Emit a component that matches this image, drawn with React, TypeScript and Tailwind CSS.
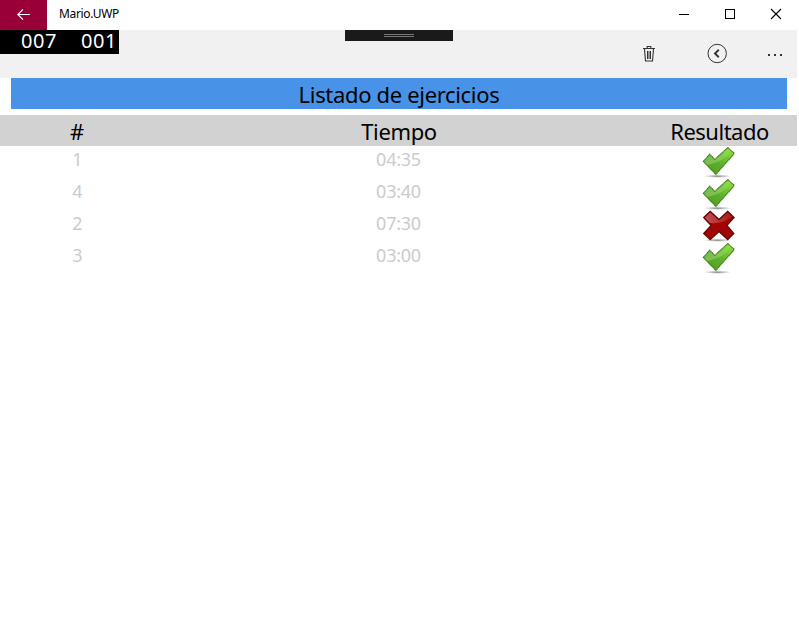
type Exercise = { id: number; time: string; passed: boolean };

const exercises: Exercise[] = [
  { id: 1, time: "04:35", passed: true },
  { id: 4, time: "03:40", passed: true },
  { id: 2, time: "07:30", passed: false },
  { id: 3, time: "03:00", passed: true },
];

function ResultIcon({ passed }: { passed: boolean }) {
  return (
    <svg width="34" height="32" viewBox="0 0 34 32">
      <defs>
        <linearGradient id="green" x1="0" y1="1" x2="0.8" y2="0">
          <stop offset="0" stopColor="#4c9a20" />
          <stop offset="0.5" stopColor="#5fae2a" />
          <stop offset="1" stopColor="#8ade3c" />
        </linearGradient>
        <linearGradient id="greenShine" x1="0" y1="0" x2="0" y2="1">
          <stop offset="0" stopColor="#c0e8a4" stopOpacity="0.1" />
          <stop offset="1" stopColor="#c0e8a4" stopOpacity="0.4" />
        </linearGradient>
        <linearGradient id="redShine" x1="0" y1="0" x2="1" y2="0">
          <stop offset="0" stopColor="#d78585" stopOpacity="0.6" />
          <stop offset="1" stopColor="#d78585" stopOpacity="0.15" />
        </linearGradient>
        <radialGradient id="shade">
          <stop offset="0" stopColor="#666" stopOpacity="0.85" />
          <stop offset="1" stopColor="#999" stopOpacity="0" />
        </radialGradient>
      </defs>
      <ellipse cx="15.5" cy="30.2" rx="14" ry="1.7" fill="url(#shade)" />
      {passed ? (
        <>
          <path d="M1.4 15.4 7.6 8.2 12.8 13.4 25.8 1.6 32.3 7.5 13.8 28.4Z" fill="url(#green)" />
          <path d="M1.4 15.4 7.6 8.2 12.8 13.4 25.8 1.6 29 4.5C25 11 18 16.5 5 18.9Z" fill="url(#greenShine)" />
          <path d="M1.4 15.4 7.6 8.2 12.8 13.4 25.8 1.6 32.3 7.5 13.8 28.4Z" fill="none" stroke="#3f7f22" strokeWidth="1.2" strokeDasharray="1.5 .3" />
        </>
      ) : (
        <>
          <path d="M1.8 7.6 8.2 1.4 17 9.5 25.7 1.4 32 7.6 24.8 15.5 31.7 23.4 25.7 29.6 17 21.5 8.2 29.6 1.8 23.4 9.2 15.5Z" fill="#a30505" />
          <path d="M1.8 7.6 8.2 1.4 17 9.5 25.7 1.4 30.7 6.3C25 10 21 14 7 13Z" fill="url(#redShine)" />
          <path d="M1.8 7.6 8.2 1.4 17 9.5 25.7 1.4 32 7.6 24.8 15.5 31.7 23.4 25.7 29.6 17 21.5 8.2 29.6 1.8 23.4 9.2 15.5Z" fill="none" stroke="#690505" strokeWidth="1.4" />
        </>
      )}
    </svg>
  );
}

function TitleBar() {
  return (
    <header className="flex h-[30px] w-[799px] items-stretch">
      <button className="flex w-[47px] items-center justify-center bg-[#9a0038]">
        <svg width="13" height="12" viewBox="0 0 13 12" fill="none" stroke="#fff" strokeWidth="1.1" className="mb-[3px]">
          <path d="M.8 6.5h12M6 1.3.8 6.5 6 11.7" />
        </svg>
      </button>
      <span className="ml-3 flex-1 text-[12px] leading-[28px] tracking-[-0.35px]">Mario.UWP</span>
      <div className="flex text-black">
        <svg width="46" height="30" fill="none" stroke="currentColor" shapeRendering="crispEdges"><path d="M18 14.5h10" /></svg>
        <svg width="46" height="30" fill="none" stroke="currentColor" shapeRendering="crispEdges"><path d="M18.5 9.5h9v9h-9z" /></svg>
        <svg width="46" height="30" fill="none" stroke="currentColor" strokeWidth="1.1"><path d="m18 9 10 10M28 9 18 19" /></svg>
      </div>
    </header>
  );
}

function CommandBar() {
  return (
    <nav className="flex h-12 w-[797px] items-start bg-[#f1f1f1]">
      <div className="flex h-6 w-[119px] bg-black pl-[21px] text-[20px] leading-[22px] tracking-[0.56px] text-white">
        <span className="w-[60px]">007</span>
        <span>001</span>
      </div>
      <div className="ml-[226px] flex h-[11px] w-[108px] flex-col items-center gap-px bg-[#1a1a1a] pt-1">
        <div className="h-px w-[30px] bg-[#777]" />
        <div className="h-px w-[30px] bg-[#777]" />
      </div>
      <div className="ml-auto flex h-12">
        <svg width="68" height="48" fill="none" stroke="#333">
          <path d="M26 18.5h12M30.2 18v-1.5h3.6V18M27.5 19l1 12h7l1-12" strokeWidth="1.1" />
          <path d="M30.5 21v8M32 21v8M33.5 21v8" strokeWidth="1" />
        </svg>
        <svg width="68" height="48" fill="none" stroke="#333">
          <circle cx="32.2" cy="23.5" r="9.2" />
          <path d="m33.8 19.8-3.8 3.7 3.8 3.7" strokeWidth="1.9" />
        </svg>
        <svg width="44" height="48" fill="#333">
          <path d="M15 24h2v2h-2zM21 24h2v2h-2zM27 24h2v2h-2z" />
        </svg>
      </div>
    </nav>
  );
}

export default function App() {
  return (
    <div className="h-[627px] w-[799px] overflow-hidden bg-white font-['Noto_Sans',sans-serif] text-black">
      <TitleBar />
      <CommandBar />
      <main className="w-[797px]">
        <h1 className="ml-[11px] h-[31px] w-[776px] bg-[#4893e7] text-center text-[22px] leading-[33px] tracking-[-0.33px]">
          Listado de ejercicios
        </h1>
        <div className="mt-1.5 grid h-[31px] grid-cols-[154px_489px_154px] bg-[#d2d2d2] text-center text-[22px] leading-[33px]">
          <span>#</span>
          <span className="pl-px tracking-[-0.35px]">Tiempo</span>
          <span className="pr-px tracking-[-0.5px]">Resultado</span>
        </div>
        {exercises.map((e) => (
          <div key={e.id} className="grid h-8 grid-cols-[154px_489px_154px] text-center text-[18px] leading-[27px] text-[#cbcbcb]">
            <span className="pl-px">{e.id}</span>
            <span className="tracking-[-0.25px]">{e.time}</span>
            <span className="flex pl-[59px]"><ResultIcon passed={e.passed} /></span>
          </div>
        ))}
      </main>
    </div>
  );
}
